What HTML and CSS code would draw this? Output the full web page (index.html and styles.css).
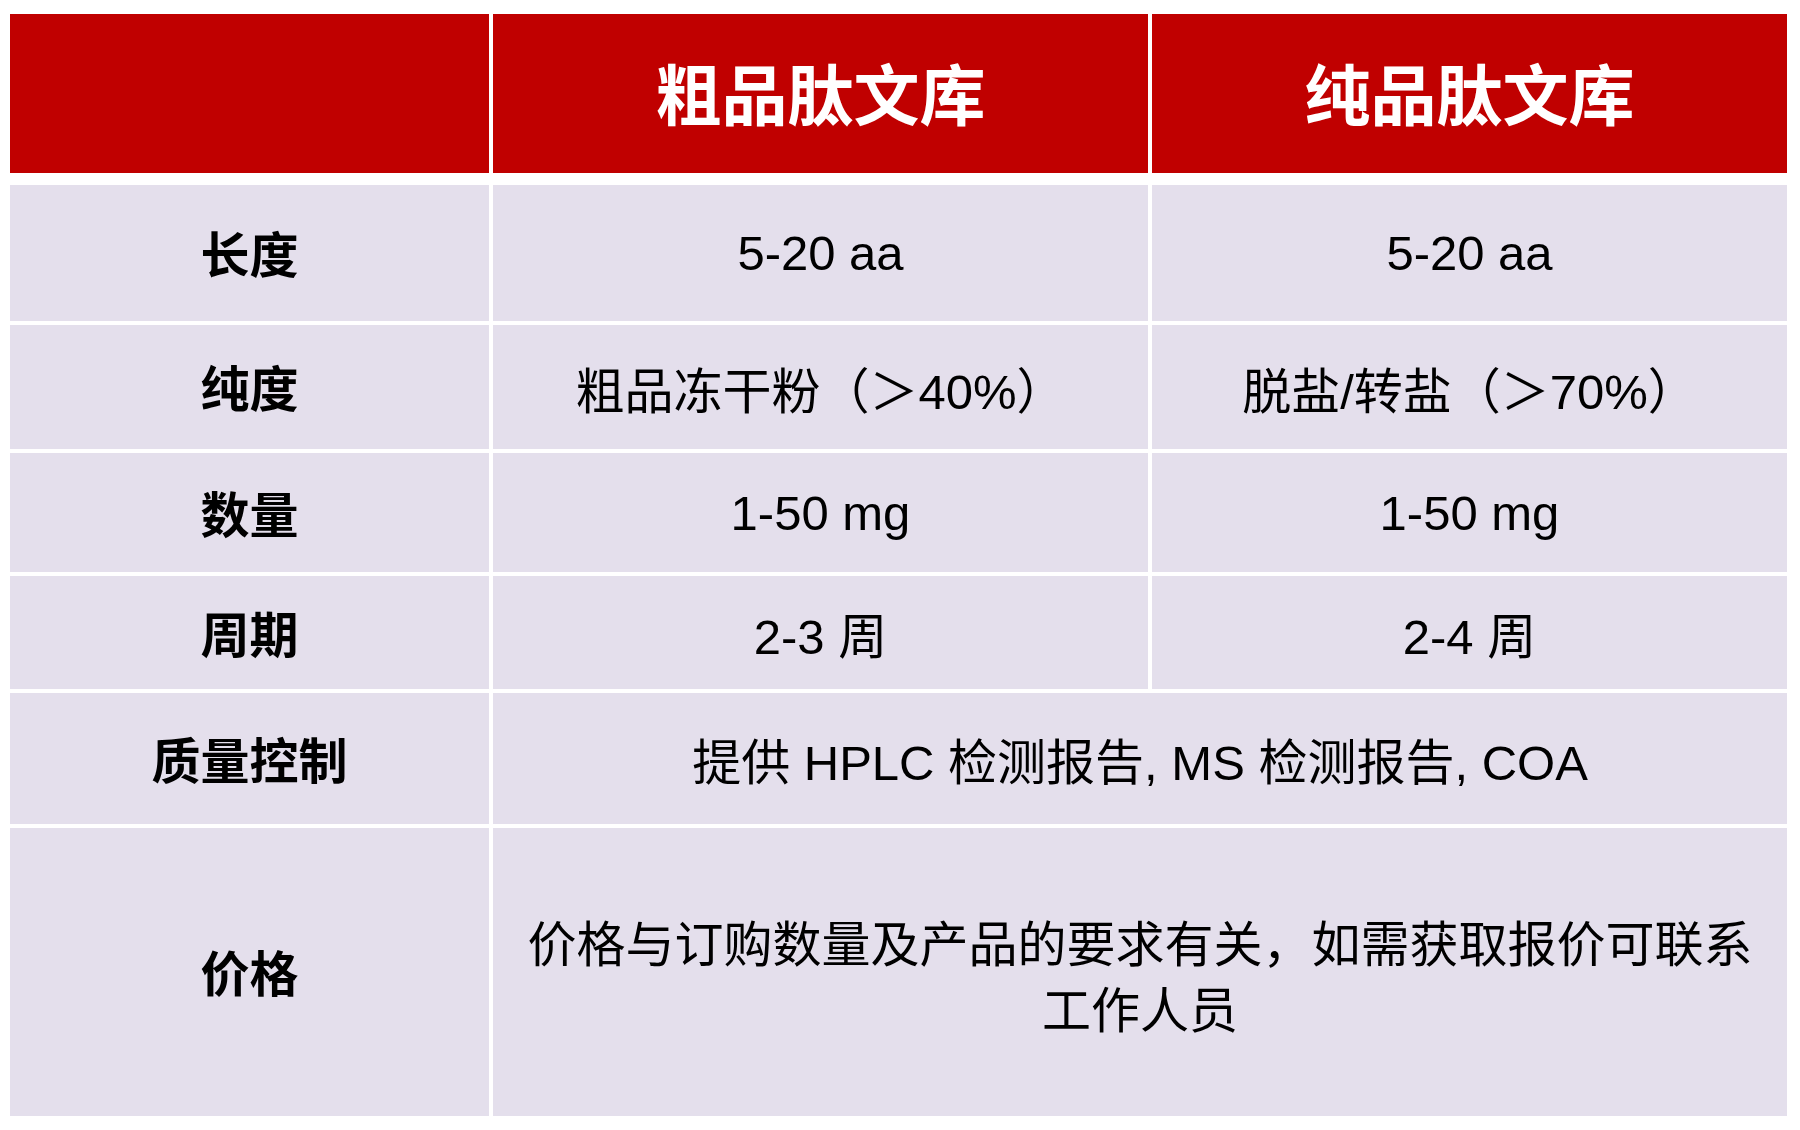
FILE: index.html
```html
<!DOCTYPE html>
<html lang="zh-CN">
<head>
<meta charset="utf-8">
<title>肽文库</title>
<link rel="stylesheet" href="styles.css">
</head>
<body>
<div class="table">
  <div class="thead">
    <div class="hcell"></div>
    <div class="hcell">粗品肽文库</div>
    <div class="hcell">纯品肽文库</div>
  </div>
  <div class="tbody">
    <div class="cell label">长度</div>
    <div class="cell">5-20 aa</div>
    <div class="cell">5-20 aa</div>

    <div class="cell label">纯度</div>
    <div class="cell">粗品冻干粉（＞40%）</div>
    <div class="cell">脱盐/转盐（＞70%）</div>

    <div class="cell label">数量</div>
    <div class="cell">1-50 mg</div>
    <div class="cell">1-50 mg</div>

    <div class="cell label">周期</div>
    <div class="cell">2-3 周</div>
    <div class="cell">2-4 周</div>

    <div class="cell label">质量控制</div>
    <div class="cell span2">提供 HPLC 检测报告, MS 检测报告, COA</div>

    <div class="cell label">价格</div>
    <div class="cell span2 wrap">价格与订购数量及产品的要求有关，如需获取报价可联系工作人员</div>
  </div>
</div>
</body>
</html>
```

FILE: styles.css
```css
html, body {
  margin: 0;
  padding: 0;
  background: #ffffff;
}

body {
  padding: 14px 0 0 10px;
  font-family: "Liberation Sans", "Noto Sans CJK SC", sans-serif;
  color: #000000;
}

.table {
  width: 1777px;
}

.thead,
.tbody {
  display: grid;
  grid-template-columns: 479px 655px 635px;
  column-gap: 4px;
}

.thead {
  grid-template-rows: 159px;
}

.tbody {
  margin-top: 12px;
  row-gap: 4px;
  grid-template-rows: 136px 124px 119px 113px 131px 288px;
}

.hcell {
  background: #c00000;
  color: #ffffff;
  font-family: "Noto Sans CJK SC", sans-serif;
  font-weight: 700;
  font-size: 66px;
  display: flex;
  align-items: center;
  justify-content: center;
  padding-bottom: 6px;
}

.cell {
  background: #e4dfec;
  font-size: 49px;
  display: flex;
  align-items: center;
  justify-content: center;
  text-align: center;
}

.label {
  font-family: "Noto Sans CJK SC", sans-serif;
  font-weight: 700;
  padding-bottom: 3px;
}

.span2 {
  grid-column: 2 / 4;
}

.wrap {
  padding: 12px 30px 0;
  line-height: 66px;
}
```
